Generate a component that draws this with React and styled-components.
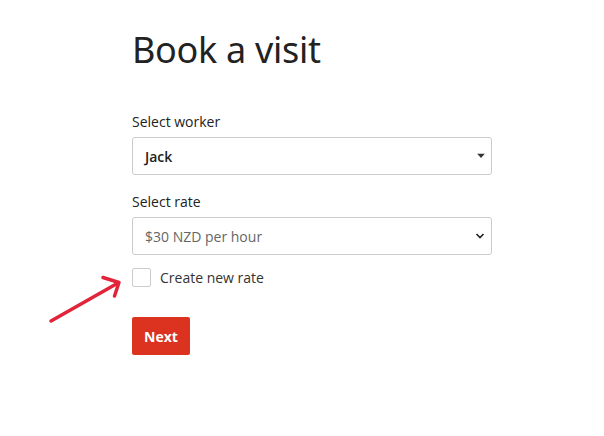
import React, { useState } from "react";
import styled, { createGlobalStyle } from "styled-components";

const GlobalStyle = createGlobalStyle`
  html, body {
    margin: 0;
    padding: 0;
    background: #fff;
    font-family: "Open Sans", "Liberation Sans", sans-serif;
    color: #222;
  }
`;

const Page = styled.div`
  position: relative;
  width: 604px;
  height: 436px;
  box-sizing: border-box;
  padding-left: 132px;
`;

const Form = styled.form`
  width: 360px;
  padding-top: 28px;
`;

const Headline = styled.h1`
  margin: 0 0 40px 0;
  font-family: "Noto Sans", "Open Sans", sans-serif;
  font-size: 36px;
  font-weight: 400;
  line-height: 44px;
  color: #222;
  letter-spacing: -0.3px;
`;

const Field = styled.div`
  margin-bottom: ${(p) => (p.$gap || 12)}px;
`;

const Label = styled.label`
  display: block;
  font-size: 14px;
  line-height: 20px;
  color: #222;
  margin-bottom: 5px;
`;

const SelectBox = styled.div`
  position: relative;
  height: 38px;
  box-sizing: border-box;
  border: 1px solid #ccc;
  border-radius: 3px;
  display: flex;
  align-items: center;
  padding: 0 12px;
  font-size: 14px;
  color: ${(p) => (p.$muted ? "#666" : "#222")};
  font-weight: ${(p) => (p.$bold ? 600 : 400)};
  background: #fff;
`;

const Caret = styled.span`
  position: absolute;
  right: 6px;
  top: 50%;
  transform: translateY(-50%);
  display: flex;
`;

const CheckRow = styled.label`
  display: flex;
  align-items: center;
  gap: 9px;
  font-size: 14px;
  color: #333;
  cursor: pointer;

  input {
    display: none;
  }
`;

const Box = styled.span`
  width: 19px;
  height: 19px;
  box-sizing: border-box;
  border: 1px solid #ccc;
  border-radius: 2px;
  background: #fff;
`;

const SubmitButton = styled.button`
  margin-top: 30px;
  height: 38px;
  padding: 0 12px;
  border: none;
  border-radius: 2px;
  background: #dc3220;
  color: #fff;
  font-family: "Open Sans", sans-serif;
  font-size: 14px;
  font-weight: 700;
  cursor: pointer;
`;

const Arrow = styled.svg`
  position: absolute;
  left: 0;
  top: 0;
  pointer-events: none;
`;

const App = () => {
  const [checked, setChecked] = useState(false);
  return (
    <Page>
      <GlobalStyle />
      <Form onSubmit={(e) => e.preventDefault()}>
        <Headline>Book a visit</Headline>
        <Field $gap={17}>
          <Label>Select worker</Label>
          <SelectBox $bold>
            Jack
            <Caret>
              <svg width="8" height="5" viewBox="0 0 8 5">
                <path d="M0 0 L8 0 L4 4.5 Z" fill="#333" />
              </svg>
            </Caret>
          </SelectBox>
        </Field>
        <Field $gap={13}>
          <Label>Select rate</Label>
          <SelectBox $muted>
            $30 NZD per hour
            <Caret>
              <svg width="10" height="6" viewBox="0 0 10 6">
                <path d="M1.5 1 L5 4.5 L8.5 1" stroke="#222" strokeWidth="1.6" fill="none" />
              </svg>
            </Caret>
          </SelectBox>
        </Field>
        <CheckRow>
          <input type="checkbox" checked={checked} onChange={() => setChecked(!checked)} />
          <Box />
          Create new rate
        </CheckRow>
        <SubmitButton type="submit">Next</SubmitButton>
      </Form>
      <Arrow width="604" height="436">
        <g stroke="#e2233a" strokeWidth="3.5" strokeLinecap="round" fill="none">
          <path d="M51 321 L118 283" />
          <path d="M103 277.5 L119 282.5 L114.5 296" strokeLinejoin="round" />
        </g>
      </Arrow>
    </Page>
  );
};

export default App;
